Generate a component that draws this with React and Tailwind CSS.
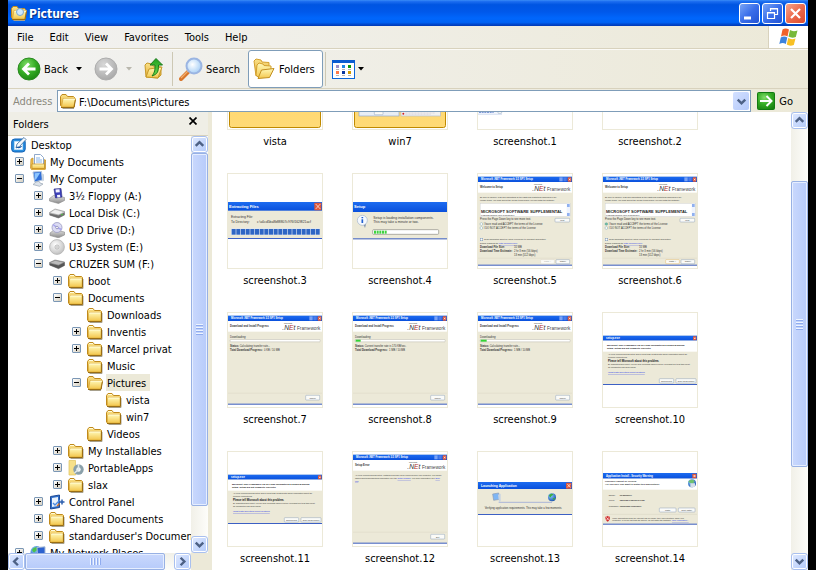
import React from "react";
import clsx from "clsx";

/* ---------- shared paint ---------- */

function Gradients() {
  const stops = (id, a, b, horizontal) => (
    <linearGradient id={id} x1="0" y1="0" x2={horizontal ? 1 : 0} y2={horizontal ? 0 : 1}>
      <stop offset="0" stopColor={a} />
      <stop offset="1" stopColor={b} />
    </linearGradient>
  );
  return (
    <svg width="0" height="0" className="absolute" aria-hidden="true">
      <defs>
        {stops("folder", "#fff9b8", "#f3c64c")}
        {stops("folderBack", "#fbe38a", "#e0a832")}
        {stops("titleBlue", "#1d6cf0", "#0a50dc")}
        {stops("drive", "#e3e3e3", "#8a8a8a")}
        {stops("gold", "#ffd469", "#ffda76")}
        {stops("arrowUp", "#1fa01f", "#6fd84f")}
        <radialGradient id="green" cx="0.4" cy="0.3" r="0.8">
          <stop offset="0" stopColor="#7fdc68" />
          <stop offset="0.5" stopColor="#35ac25" />
          <stop offset="1" stopColor="#17800f" />
        </radialGradient>
        <radialGradient id="grey" cx="0.4" cy="0.3" r="0.8">
          <stop offset="0" stopColor="#d8d8d8" />
          <stop offset="1" stopColor="#a3a3a3" />
        </radialGradient>
        <radialGradient id="lens" cx="0.4" cy="0.4" r="0.7">
          <stop offset="0" stopColor="#ffffff" />
          <stop offset="1" stopColor="#9cc9f5" />
        </radialGradient>
        <radialGradient id="disc" cx="0.4" cy="0.35" r="0.8">
          <stop offset="0" stopColor="#ffffff" />
          <stop offset="1" stopColor="#b4b4b4" />
        </radialGradient>
        <radialGradient id="globe" cx="0.35" cy="0.3" r="0.8">
          <stop offset="0" stopColor="#8fd0ff" />
          <stop offset="1" stopColor="#1148a8" />
        </radialGradient>
      </defs>
    </svg>
  );
}

/* ---------- 16px icons ---------- */

const Icon = ({ children, className = "size-4" }) => (
  <svg viewBox="0 0 16 16" className={clsx("shrink-0", className)} aria-hidden="true">
    {children}
  </svg>
);

const icons = {
  folder: (
    <>
      <path d="M2.500 15.500h12.500V6" stroke="#a7a08c" fill="none" />
      <path d="M0.500 3.500l1.500-2h4l1.500 2h6l1 1v9.500h-13l-1-1z" fill="url(#folderBack)" stroke="#c08a1c" />
      <path d="M1.500 6.500l1-1h11.500v8.500h-12.500z" fill="url(#folder)" stroke="#d9a838" strokeWidth="0.600" />
      <path d="M2 2.500h4M2.500 6h11" stroke="#fffbd8" fill="none" />
      <path d="M1 14.500h13.500v-9" stroke="#9a6e14" fill="none" />
    </>
  ),
  open: (
    <>
      <path d="M2.500 15.500h11.500" stroke="#a7a08c" fill="none" />
      <path d="M0.500 3.500l1.500-2h4l1.500 2h6l1 1v9h-13l-1-1z" fill="url(#folderBack)" stroke="#c08a1c" />
      <path d="M3 5.500h12.500l-1.800 8.500H1.500z" fill="url(#folder)" stroke="#d9a838" strokeWidth="0.800" />
      <path d="M3.500 6.200h11.500" stroke="#fffbd8" fill="none" />
      <path d="M1 14.500h13l1.500-8" stroke="#9a6e14" fill="none" />
    </>
  ),
  desktop: (
    <>
      <rect x="0.700" y="2" width="13.500" height="13" rx="3" fill="#2a8fe0" stroke="#0f5fb4" />
      <path d="M3.500 4.500h8v8h-8z" fill="#fff" stroke="#bcdcf5" />
      <path d="M5 11l1-4 7-6.500 2 2L8.500 9.500z" fill="#f4f8fc" stroke="#35699d" strokeWidth="0.800" />
      <path d="M5.500 10c2 1 4 .5 5-1" stroke="#1a5aa8" strokeWidth="1.300" fill="none" />
    </>
  ),
  documents: (
    <>
      <path d="M1 5l2-1v10l11.500.500v-9l1 .500v9l-1 1H2l-1.500-2z" fill="#f2c254" stroke="#bf8b1e" strokeWidth="0.700" />
      <path d="M4.500 0.500h6l3 3V12h-9z" fill="#fff" stroke="#8fa9cc" />
      <path d="M6 4h4M6 6h6M6 8h6" stroke="#85b3e8" />
      <path d="M2 10h12.500v4.500H2z" fill="url(#folder)" stroke="#c08a1c" strokeWidth="0.700" />
    </>
  ),
  computer: (
    <>
      <path d="M3 1l8.500-.500.800 8.500-7.600 2z" fill="#2f6fd8" stroke="#b4c6dc" />
      <path d="M4.500 2.200l5.700-.500L6 8.500 5 8.800z" fill="#8cc5ff" />
      <path d="M6 11l3-.700 1 1.700 3 1-3.500 2.300L3 13.500z" fill="#dde3ea" stroke="#9aa6b4" strokeWidth="0.700" />
      <path d="M12.300 2.500l1.700 1v6l-1.700 1" fill="#c6d2de" />
    </>
  ),
  floppy: (
    <>
      <path d="M0.500 10.500l4-3 11 2v3l-6 3-9-2.500z" fill="url(#drive)" stroke="#8a8a8a" strokeWidth="0.600" />
      <path d="M5 1l7-.500 1 8.500-6.500 1z" fill="#3c3fb8" stroke="#26287c" strokeWidth="0.600" />
      <path d="M6.500 1.500l4-.300.300 3-4 .300zM8 7l3-.300.300 2.500-3 .300z" fill="#f4f4ff" />
    </>
  ),
  disk: (
    <>
      <path d="M0.500 7.500L6 4l9.500 2.500v3.500l-6 3-9-3z" fill="url(#drive)" stroke="#888" strokeWidth="0.600" />
      <path d="M1.500 7.500L6.200 5l8 2-4.700 2.500z" fill="#f1f1f1" />
      <path d="M1 8.500l8.500 2v2.500l-8.500-2.800zM9.500 10.500l6-3v2.500l-6 3z" fill="#6e6e6e" />
      <circle cx="13" cy="9.600" r="0.800" fill="#4dc93c" />
    </>
  ),
  removable: (
    <>
      <path d="M0.500 6.500L6 4l9.500 2v3.500l-6 3.200-9-3.700z" fill="#8a8a8a" stroke="#7a7a7a" strokeWidth="0.600" />
      <path d="M1.500 6.700L6.200 4.800l8 1.600-4.700 2.300z" fill="#bcbcbc" />
      <path d="M1 7.500l8.500 2v3l-8.500-3.300zM9.500 9.500l6-3v3l-6 3z" fill="#565656" />
    </>
  ),
  cd: (
    <>
      <path d="M1 11l4-3 10.500 2v3l-6 2.800L1 13.500z" fill="url(#drive)" stroke="#8a8a8a" strokeWidth="0.600" />
      <circle cx="8" cy="5.500" r="5" fill="#dcdcf4" stroke="#9c9cc2" strokeWidth="0.800" />
      <path d="M8 5.500L4 2.500M8 5.500l4.500 2" stroke="#a7a4ef" strokeWidth="1.500" />
      <circle cx="8" cy="5.500" r="1.300" fill="#fff" stroke="#7f7fa8" strokeWidth="0.700" />
    </>
  ),
  u3: (
    <>
      <circle cx="8" cy="8" r="7.400" fill="url(#disc)" stroke="#b5b5b5" strokeWidth="0.800" />
      <circle cx="8" cy="8" r="2" fill="#fff" stroke="#aaa" strokeWidth="0.800" />
      <circle cx="8" cy="8" r="0.700" fill="#888" />
    </>
  ),
  portable: (
    <>
      <path d="M1 0.500h6.500v14.500H1z" fill="#f6e08a" stroke="#e0c25a" strokeWidth="0.700" />
      <circle cx="10.500" cy="9.500" r="5.200" fill="#8aa0aa" />
      <circle cx="10.500" cy="9.500" r="2.200" fill="#f3f7f8" />
      <path d="M10.500 4.300v5.200l-4 3.500" stroke="#dfe8ec" strokeWidth="1.500" fill="none" />
    </>
  ),
  control: (
    <>
      <path d="M1.500 2.500l9-1.500v12.500l-9 1.500z" fill="#2f6fca" stroke="#123f8e" strokeWidth="0.900" />
      <path d="M3 4l6-1v9l-6 1z" fill="#e9f2fc" />
      <path d="M4 9l2 2 5-5" stroke="#4d8ae0" strokeWidth="1.400" fill="none" />
      <path d="M8 12l2.500-2.500" stroke="#d0722b" strokeWidth="1.500" />
      <path d="M10 8h5.500M13 5.500v5" stroke="#2c5fae" strokeWidth="1.500" />
    </>
  ),
  network: (
    <>
      <circle cx="6.500" cy="7" r="6" fill="url(#globe)" />
      <path d="M2 5c2-4 6-3 7-1-1 2-3 1-4 3-1 1-2 0-3-2z" fill="#4cc24c" />
      <path d="M7 2.500l8-.700v8l-7.500 1z" fill="#2c62d0" stroke="#a9bcd6" />
    </>
  ),
};

/* Caption of a control, optically centred against its icon. */
const Caption = ({ children }) => <span className="pt-[2px]">{children}</span>;

/* ---------- scroll bars ---------- */

const chevrons = {
  up: "M4 9.500l4-4 4 4",
  down: "M4 6l4 4 4-4",
  left: "M9.500 4l-4 4 4 4",
  right: "M6 4l4 4-4 4",
};

function ArrowButton({ dir }) {
  return (
    <button
      type="button"
      aria-label={`Scroll ${dir}`}
      className="grid size-[17px] shrink-0 place-items-center rounded-[3px] border border-[#a9c0ef] bg-linear-to-br from-[#dfe9ff] to-[#b3cafa] shadow-[inset_0_0_0_1px_#fff]"
    >
      <Icon className="size-[15px]">
        <path d={chevrons[dir]} stroke="#4d6185" strokeWidth="2.600" fill="none" />
      </Icon>
    </button>
  );
}

function ScrollBar({ vertical, before, thumb, after }) {
  return (
    <div
      className={clsx(
        "flex shrink-0",
        vertical
          ? "w-[17px] flex-col bg-linear-to-r from-[#f1f0e8] to-[#fdfdfa]"
          : "h-[17px] bg-linear-to-b from-[#f1f0e8] to-[#fdfdfa]"
      )}
    >
      <ArrowButton dir={vertical ? "up" : "left"} />
      <div className={clsx("basis-0", before)} />
      <div
        className={clsx(
          "flex basis-0 items-center justify-center gap-px rounded-[2px] border border-[#98b1e4] shadow-[inset_0_0_0_1px_#e6eeff]",
          vertical ? "flex-col bg-linear-to-r" : "bg-linear-to-b",
          "from-[#c9d8fd] to-[#b7cbfa]",
          thumb
        )}
      >
        {[0, 1, 2, 3].map((n) => (
          <span
            key={n}
            className={clsx(
              "box-content border-[#8fabef] bg-[#eef4fe]",
              vertical ? "h-px w-[7px] border-b" : "h-[7px] w-px border-r"
            )}
          />
        ))}
      </div>
      <div className={clsx("basis-0", after)} />
      <ArrowButton dir={vertical ? "down" : "right"} />
    </div>
  );
}

/* ---------- title bar and menus ---------- */

function CaptionButton({ label, close, children }) {
  return (
    <button
      type="button"
      aria-label={label}
      className={clsx(
        "size-[21px] rounded-[3px] border border-white bg-linear-to-br",
        close ? "from-[#f5a48c] via-[#ec6a4c] to-[#dc4a2c]" : "from-[#7aa4f5] via-[#3a6eea] to-[#2253d4]"
      )}
    >
      <svg viewBox="0 0 19 19" className="size-[19px]" fill="none" stroke="#fff">
        {children}
      </svg>
    </button>
  );
}

function TitleBar() {
  return (
    <header className="flex h-[26px] shrink-0 items-center bg-[linear-gradient(180deg,#3a8cf6_0%,#1c6df0_6%,#0055e2_18%,#0058ea_45%,#0066fc_70%,#0062f4_86%,#0047cc_94%,#0138b4_100%)] pr-[2px] pl-[3px]">
      <Icon>
        {icons.open}
        <circle cx="9" cy="7" r="3.500" fill="#cfe8fb" stroke="#7ba7d0" />
      </Icon>
      <h1 className="ml-[2px] flex-1 pt-[2px] text-[12px] leading-4 font-bold text-white [text-shadow:1px_1px_1px_#0a2a7c]">
        Pictures
      </h1>
      <div className="flex gap-[2px]">
        <CaptionButton label="Minimize">
          <path d="M4 14h7" strokeWidth="3" />
        </CaptionButton>
        <CaptionButton label="Restore">
          <path d="M7.500 7V4.500h7v6H12M7 5h8" strokeWidth="1.200" />
          <path d="M4.500 8.500h7v6h-7zM4 9h8" strokeWidth="1.200" />
        </CaptionButton>
        <CaptionButton label="Close" close>
          <path d="M5 5l9 9M14 5l-9 9" strokeWidth="2.200" />
        </CaptionButton>
      </div>
    </header>
  );
}

const menus = ["File", "Edit", "View", "Favorites", "Tools", "Help"];

function MenuBar() {
  return (
    <div className="flex h-[23px] shrink-0 border-b border-[#d8d2bd]">
      <nav className="flex flex-1 items-center pl-px">
        {menus.map((m) => (
          <button key={m} type="button" className="px-2 pt-[2px]">
            {m}
          </button>
        ))}
      </nav>
      <div className="grid w-10 place-items-center border-l border-[#d8d2bd] bg-white">
        <svg viewBox="0 0 20 18" className="h-[18px] w-5" aria-hidden="true">
          <path d="M3.500 1.500q3-2 6.500 0L8.500 8.500q-3-2-6.500 0z" fill="#f0622a" />
          <path d="M11 2q3 2 7.500.500L16.800 9q-4 1.500-7.300-.500z" fill="#77b93a" />
          <path d="M1.800 9.500q3.500-2 6.500 0L6.800 16q-3-2-6.500 0z" fill="#3d83dd" />
          <path d="M9.200 10q3 2 7.300.500L14.800 17q-4 1.500-7-.500z" fill="#f8c023" />
        </svg>
      </div>
    </div>
  );
}

/* ---------- toolbar ---------- */

const Caret = ({ className }) => (
  <svg viewBox="0 0 6 4" className={clsx("h-1 w-[6px] fill-current", className)} aria-hidden="true">
    <path d="M0 0h6L3 3.500z" />
  </svg>
);

const RoundArrow = ({ back }) => (
  <svg viewBox="0 0 24 24" className="size-6" aria-hidden="true">
    <circle cx="12" cy="12" r="11" fill={back ? "url(#green)" : "url(#grey)"} stroke={back ? "#2b8a22" : "#adadad"} />
    <path
      d={back ? "M18.500 12H7M12 6.500L6.500 12l5.500 5.500" : "M5.500 12H17M12 6.500l5.500 5.500-5.500 5.500"}
      stroke="#fff"
      strokeWidth="2.800"
      fill="none"
    />
  </svg>
);

const Separator = () => <span className="h-[34px] w-px bg-[#cdc8b4]" />;

function ToolBar() {
  return (
    <div className="flex h-[40px] shrink-0 items-center border-t border-b border-t-[#fbfaf6] border-b-[#d8d2bd] pl-[9px]">
      <button type="button" className="flex items-center gap-[3px]">
        <RoundArrow back />
        <Caption>Back</Caption>
      </button>
      <button type="button" aria-label="Back history" className="ml-2">
        <Caret />
      </button>
      <button type="button" aria-label="Forward" className="ml-3" disabled>
        <RoundArrow />
      </button>
      <button type="button" aria-label="Forward history" className="ml-2 text-[#b9b7ad]" disabled>
        <Caret />
      </button>
      <button type="button" aria-label="Up" className="ml-3">
        <svg viewBox="0 0 20 24" className="h-6 w-5" aria-hidden="true">
          <path d="M1 8l2-2 5 1 1 2 8 1v8l-3 3L2 20z" fill="url(#folderBack)" stroke="#c79a2a" />
          <path d="M2 20l3-8 13-2-4 11z" fill="url(#folder)" stroke="#c79a2a" />
          <path d="M12 1.500l6.500 6.500h-4c0 7-1 9-6.500 11 3-4 3-6 3-11H6z" fill="url(#arrowUp)" stroke="#1a7a1a" />
        </svg>
      </button>
      <span className="ml-2 flex">
        <Separator />
      </span>
      <button type="button" className="ml-[6px] flex items-center gap-[3px]">
        <svg viewBox="0 0 24 24" className="size-6" aria-hidden="true">
          <path d="M2 22l8-8" stroke="#d8762c" strokeWidth="4" strokeLinecap="round" />
          <path d="M2 21l7-7" stroke="#f2ae6e" strokeWidth="1.200" />
          <circle cx="15" cy="9" r="7.500" fill="url(#lens)" stroke="#9bb5e2" strokeWidth="2" />
        </svg>
        <Caption>Search</Caption>
      </button>
      <button
        type="button"
        aria-pressed="true"
        className="ml-2 flex h-[38px] items-center gap-1 rounded-[3px] border border-[#7f9db9] bg-white pr-[7px] pl-1"
      >
        <svg viewBox="0 0 22 22" className="size-[22px]" aria-hidden="true">
          <path d="M1 3l2-2 5 1 1 2 7 .500v9L3 18z" fill="url(#folderBack)" stroke="#d3a02e" />
          <path d="M4 7l2-2 4 1 1 1.500 7 .500v8L6 20 3 17z" fill="url(#folder)" stroke="#d3a02e" />
          <path d="M5 20.500L8.500 12 21 10.500 16.500 19.500z" fill="url(#folder)" stroke="#c28f20" />
        </svg>
        <Caption>Folders</Caption>
      </button>
      <span className="ml-[2px] flex">
        <Separator />
      </span>
      <button type="button" aria-label="Views" className="ml-[6px] flex items-center gap-[3px]">
        <svg viewBox="0 0 23 19" className="h-[19px] w-[23px]" aria-hidden="true">
          <rect x="0.500" y="0.500" width="22" height="18" fill="#fff" stroke="#0a66d8" />
          <path d="M0 0h23v3H0z" fill="#0a5cd0" />
          <path d="M4 5h3v3H4z" fill="#9c8fc8" />
          <path d="M10 5h3v3h-3z" fill="#1c86e4" />
          <path d="M16 5h3v3h-3z" fill="#0a980a" />
          <path d="M4 11h3v3H4z" fill="#ff7a48" />
          <path d="M10 11h3v3h-3z" fill="#0a37a0" />
          <path d="M16 11h3v3h-3z" fill="#cf9a00" />
          <path d="M4 9.500h3m3 0h3m3 0h3M4 15.500h3m3 0h3m3 0h3" stroke="#b5b5b5" />
        </svg>
        <Caret />
      </button>
    </div>
  );
}

function AddressBar() {
  return (
    <div className="flex h-[23px] shrink-0 items-center pt-px pl-[5px]">
      <label htmlFor="address" className="w-[44px] pt-[2px] text-[#8b897d]">
        Address
      </label>
      <div className="flex h-[22px] flex-1 items-center border border-[#7f9db9] bg-white pr-px pl-[2px]">
        <Icon>{icons.open}</Icon>
        <input
          id="address"
          type="text"
          defaultValue="F:\Documents\Pictures"
          className="ml-[3px] h-5 min-w-0 flex-1 bg-transparent pt-[2px] outline-none"
        />
        <button
          type="button"
          aria-label="Address history"
          className="grid h-[18px] w-4 place-items-center rounded-[2px] bg-linear-to-br from-[#d3e0ff] to-[#b4c9fa]"
        >
          <Icon className="size-[15px]">
            <path d={chevrons.down} stroke="#4d6185" strokeWidth="2.600" fill="none" />
          </Icon>
        </button>
      </div>
      <button type="button" className="flex items-center gap-1 pr-[15px] pl-[6px]">
        <svg viewBox="0 0 18 18" className="size-[18px]" aria-hidden="true">
          <rect x="0.500" y="0.500" width="17" height="17" rx="1" fill="url(#green)" stroke="#127a12" />
          <path d="M3 9h11M9.500 4l5 5-5 5" stroke="#fff" strokeWidth="2" fill="none" />
        </svg>
        <Caption>Go</Caption>
      </button>
    </div>
  );
}

/* ---------- folder tree ---------- */

const tree = [
  [0, "", "desktop", "Desktop"],
  [1, "+", "documents", "My Documents"],
  [1, "-", "computer", "My Computer"],
  [2, "+", "floppy", "3½ Floppy (A:)"],
  [2, "+", "disk", "Local Disk (C:)"],
  [2, "+", "cd", "CD Drive (D:)"],
  [2, "+", "u3", "U3 System (E:)"],
  [2, "-", "removable", "CRUZER SUM (F:)"],
  [3, "+", "folder", "boot"],
  [3, "-", "folder", "Documents"],
  [4, "", "folder", "Downloads"],
  [4, "+", "folder", "Inventis"],
  [4, "+", "folder", "Marcel privat"],
  [4, "", "folder", "Music"],
  [4, "-", "open", "Pictures"],
  [5, "", "folder", "vista"],
  [5, "", "folder", "win7"],
  [4, "", "folder", "Videos"],
  [3, "+", "folder", "My Installables"],
  [3, "+", "portable", "PortableApps"],
  [3, "+", "folder", "slax"],
  [2, "+", "control", "Control Panel"],
  [2, "+", "folder", "Shared Documents"],
  [2, "+", "folder", "standarduser's Documents"],
  [1, "+", "network", "My Network Places"],
];

const indents = ["pl-[3px]", "pl-[3px]", "pl-[22px]", "pl-[41px]", "pl-[60px]", "pl-[79px]"];

function Expander({ state, name }) {
  return (
    <button
      type="button"
      aria-label={`${state === "+" ? "Expand" : "Collapse"} ${name}`}
      className="size-[9px] rounded-[1px] border border-[#7b97b5] bg-linear-to-br from-white to-[#d5cfc0]"
    >
      <svg viewBox="0 0 7 7" className="size-[7px]" stroke="#000">
        <path d={state === "+" ? "M1 3.500h5M3.500 1v5" : "M1 3.500h5"} />
      </svg>
    </button>
  );
}

function FolderPane() {
  return (
    <aside className="flex w-[200px] shrink-0 flex-col">
      <div className="flex h-6 shrink-0 items-center justify-between border-b border-[#d8d2bd] bg-[#efeee6] pr-[11px] pl-[5px]">
        <h2 className="pt-[2px]">Folders</h2>
        <button type="button" aria-label="Close folders" className="mb-[6px]">
          <svg viewBox="0 0 8 8" className="size-2" stroke="#000" strokeWidth="1.700">
            <path d="M0.500 0.500l7 7M7.500 0.500l-7 7" />
          </svg>
        </button>
      </div>
      <div className="flex min-h-0 flex-1">
        <ul className="min-w-0 flex-1 overflow-hidden bg-white">
          {tree.map(([level, state, icon, name]) => (
            <li key={name} className={clsx("flex h-[17px] items-center whitespace-nowrap", indents[level])}>
              {level > 0 && (
                <span className="flex w-[19px] shrink-0 pl-1">{state && <Expander state={state} name={name} />}</span>
              )}
              <Icon>{icons[icon]}</Icon>
              <a
                href="#tree"
                className={clsx("ml-[3px] h-[17px] pr-1 pl-px leading-[19px]", name === "Pictures" && "bg-[#ece9d8]")}
              >
                {name}
              </a>
            </li>
          ))}
        </ul>
        <ScrollBar vertical before="grow-0" thumb="grow-[354]" after="grow-[30]" />
      </div>
      <div className="flex bg-[#ece9d8] pr-[17px]">
        <div className="flex-1">
          <ScrollBar before="grow-0" thumb="grow-[140]" after="grow-[9]" />
        </div>
      </div>
    </aside>
  );
}

/* ---------- thumbnails, drawn on a 282 unit square ---------- */

const T = ({ x, y, s = 8, b, fill = "#333", children }) => (
  <text x={x} y={y} fontSize={s} fontWeight={b ? 700 : 400} fill={fill}>
    {children}
  </text>
);

const Link = ({ children }) => (
  <tspan fill="#2434e8" textDecoration="underline">
    {children}
  </tspan>
);

const CloseBox = ({ y, h }) => (
  <g>
    <rect x={282 - h} y={y} width={h - 2} height={h} rx="2" fill="#e0583a" />
    <path d={`M${286 - h} ${y + 4}l${h - 9} ${h - 8}m0 ${8 - h}l${9 - h} ${h - 8}`} stroke="#fff" strokeWidth="2" />
  </g>
);

const Window = ({ y, bar, h, title, size = 9, closable = true }) => (
  <g>
    <rect y={y} width="282" height={h} fill="#ece9d8" />
    <rect y={y} width="282" height={bar} fill="url(#titleBlue)" />
    <rect y={y + h - 3} width="282" height="3" fill="#3c60c4" />
    <T x={size > 10 ? 3 : 9} y={y + bar / 2 + size / 3} s={size} b fill="#fff">
      {title}
    </T>
    {closable && <CloseBox y={y + 2} h={bar - 3} />}
  </g>
);

const Btn = ({ x, y, w, h = 12, label, hot, dim }) => (
  <g>
    <rect x={x} y={y} width={w} height={h} rx="2" fill="#fbfbf8" stroke={hot ? "#dc9a2a" : dim ? "#d0ccbc" : "#5f7ba4"} />
    <text x={x + w / 2} y={y + h - 4} fontSize="6" textAnchor="middle" fill={dim ? "#aaa" : "#333"}>
      {label}
    </text>
  </g>
);

const NetWindow = ({ heading, foot }) => (
  <g>
    <Window y={8} bar={16} h={267} title="Microsoft .NET Framework 3.5 SP1 Setup" size={8} />
    <path d="M244 10h10v12h-10z" fill="#7aa2f4" />
    <path d="M256 10h10v12h-10z" fill="#4c7ce8" />
    <rect y="24" width="282" height="32" fill="#fff" />
    <T x={6} y={43} b>
      {heading}
    </T>
    <T x={168} y={32} s={6}>
      Microsoft
    </T>
    <text x="163" y="51" fontSize="20" fontStyle="italic" fill="#333">
      .N<tspan fill="#b0302a">E</tspan>t
    </text>
    <T x={207} y={51} s={14} fill="#444">
      Framework
    </T>
    <path d={`M0 ${foot}.500h282`} stroke="#d2cdb8" />
  </g>
);

const License = ({ accepted }) => (
  <g>
    <NetWindow heading="Welcome to Setup" foot={252} />
    <T x={6} y={73} s={6}>Be sure to carefully read and understand all the rights and restrictions described in the</T>
    <T x={6} y={82} s={6}>license terms. You must accept the license terms before you can install the software.</T>
    <rect x="6.500" y="88.500" width="270" height="39" fill="#fff" stroke="#c4c9cf" />
    <rect x="266" y="89" width="10" height="38" fill="#eef3fd" />
    <path d="M267 90h8v9h-8zM267 117h8v9h-8z" fill="#8fb0f0" />
    <T x={9} y={118} s={12} b fill="#222">MICROSOFT SOFTWARE SUPPLEMENTAL</T>
    <T x={9} y={127} s={6}>LICENSE TERMS FOR MICROSOFT</T>
    <T x={6} y={139}>Press the Page Down key to see more text.</T>
    <Btn x={231} y={133} w={44} h={11} label="Print" />
    <circle cx="10" cy="150" r="4" fill={accepted ? "#6fc2a0" : "#fff"} stroke="#4f8a9a" />
    <T x={17} y={152}>I have read and ACCEPT the terms of the License</T>
    <circle cx="10" cy="162" r="4" fill="#fff" stroke="#4f8a9a" />
    <T x={17} y={165}>I DO NOT ACCEPT the terms of the License</T>
    <rect x="6.500" y="192.500" width="8" height="8" fill="#fff" stroke="#4870a0" />
    <T x={18} y={199} s={6}>Send information about my setup experience to Microsoft Corporation.</T>
    <T x={6} y={210} s={6}>
      Details regarding the <Link>data collection policy</Link>
    </T>
    <T x={6} y={222} b>Download File Size:</T>
    <T x={108} y={222}>10 MB</T>
    <T x={6} y={235} b>Download Time Estimate:</T>
    <T x={108} y={235}>2 hr 3 min (56 kbps)</T>
    <T x={108} y={246}>13 min (512 kbps)</T>
    <Btn x={188} y={257} w={41} label="Install >" hot={accepted} dim={!accepted} />
    <Btn x={234} y={257} w={41} label="Cancel" />
  </g>
);

const Download = ({ status, total, fill }) => (
  <g>
    <NetWindow heading="Download and Install Progress" foot={240} />
    <T x={6} y={75}>Downloading:</T>
    <rect x="6.500" y="79.500" width="270" height="7" rx="2" fill="#fff" stroke="#9c9a90" />
    <rect x="8" y="80" width={fill} height="6" fill="#35d335" />
    <T x={6} y={102} b>Status:</T>
    <T x={35} y={102}>{status}</T>
    <T x={6} y={114} b>Total Download Progress:</T>
    <T x={108} y={114}>{total}</T>
    <Btn x={233} y={247} w={42} h={14} label="Cancel" />
  </g>
);

const ErrorReport = () => (
  <g>
    <Window y={68} bar={15} h={148} title="setup.exe" />
    <rect y="83" width="282" height="33" fill="#fff" />
    <T x={12} y={98} s={7} b fill="#111">Microsoft .NET Framework 3.5 SP1 has encountered a problem during</T>
    <T x={12} y={107} s={7} b fill="#111">setup. Setup did not complete correctly.</T>
    <T x={15} y={127} s={6}>An error occurred during setup and a report was created with useful information about the</T>
    <T x={15} y={135} s={6}>problem encountered.</T>
    <T x={15} y={147} s={8} b fill="#111">Please tell Microsoft about this problem.</T>
    <T x={15} y={156} s={6}>By submitting this report, you will help Microsoft improve setup. Microsoft will treat this report</T>
    <T x={15} y={164} s={6}>as confidential and anonymous.</T>
    <T x={15} y={180} s={7}>
      <Link>What data does this report contain?</Link>
    </T>
    <Btn x={169} y={197} w={43} h={13} label="Send Report" />
    <Btn x={219} y={197} w={60} h={13} label="Don't Send Report" />
  </g>
);

const FolderTile = ({ children }) => (
  <g>
    <rect x="4.500" y="4.500" width="273" height="273" rx="6" fill="url(#gold)" stroke="#c08a00" strokeWidth="3" />
    {children}
  </g>
);

const drawings = {
  vista: <FolderTile />,
  win7: (
    <FolderTile>
      <rect x="18" y="170" width="120" height="73" fill="#e8eef6" stroke="#93a9c8" strokeWidth="2" />
      <Btn x={64} y={230} w={26} h={9} />
      <rect x="144" y="170" width="118" height="73" fill="#f1f1f1" stroke="#b4bccb" strokeWidth="2" />
      <circle cx="151" cy="236" r="3" fill="#d02020" />
      <path d="M157 234h90M157 238h76" stroke="#b9a9c4" strokeDasharray="7 2" />
    </FolderTile>
  ),
  "screenshot.1": (
    <g>
      <rect x="0" y="190" width="72" height="48" fill="#f3f6fc" />
      <path d="M3 232h44" stroke="#7f9bd8" strokeWidth="4" strokeDasharray="6 2" />
      <Btn x={60} y={226} w={11} h={9} />
      <path d="M0 238h72" stroke="#8fa9dc" strokeWidth="1" />
    </g>
  ),
  "screenshot.2": null,
  "screenshot.3": (
    <g>
      <Window y={84} bar={26} h={111} title="Extracting Files" size={12} />
      <T x={9} y={131} s={10}>Extracting File:</T>
      <T x={9} y={147} s={10}>To Directory:</T>
      <T x={87} y={147} s={10}>c:\a6cd5ba8b88807c976f162f821acf</T>
      <rect x="9" y="163" width="266" height="20" fill="#dfe6f2" />
      {Array.from({ length: 19 }, (_, i) => (
        <rect key={i} x={11 + i * 14} y="165" width="12" height="17" fill="#2f66c4" />
      ))}
    </g>
  ),
  "screenshot.4": (
    <g>
      <Window y={84} bar={30} h={112} title="Setup" size={12} closable={false} />
      <path d="M32 152l4 10 3-12z" fill="#7b8ea8" />
      <circle cx="28" cy="139" r="15" fill="#f5f9ff" stroke="#9fb2cc" strokeWidth="2" />
      <path d="M28 136v11M28 129v4" stroke="#2260d0" strokeWidth="5" />
      <T x={61} y={134} s={10}>Setup is loading installation components.</T>
      <T x={61} y={148} s={10}>This may take a minute or two.</T>
      <rect x="59" y="167" width="198" height="14" rx="3" fill="#fff" stroke="#8d8d84" strokeWidth="2" />
      {[0, 1, 2, 3, 4].map((i) => (
        <rect key={i} x={63 + i * 8} y="170" width="6" height="9" fill="#3fd23f" />
      ))}
    </g>
  ),
  "screenshot.5": <License />,
  "screenshot.6": <License accepted />,
  "screenshot.7": <Download status="Calculating transfer rate..." total="0 KB / 10 MB" fill={0} />,
  "screenshot.8": <Download status="Current transfer rate is 170 KB/sec." total="1 MB / 10 MB" fill={15} />,
  "screenshot.9": <Download status="Calculating transfer rate..." total="1 MB / 10 MB" fill={18} />,
  "screenshot.10": <ErrorReport />,
  "screenshot.11": <ErrorReport />,
  "screenshot.12": (
    <g>
      <NetWindow heading="Setup Error" foot={240} />
      <T x={6} y={73} s={6}>An error occurred during setup. Installed files have been removed from your computer. For known</T>
      <T x={6} y={81} s={6}>
        issues and troubleshooting information, see the <Link>Setup Readme</Link>. For more information, see <Link>Error</Link>
      </T>
      <T x={6} y={89} s={6}>
        <Link>Log</Link>
      </T>
      <Btn x={233} y={247} w={42} h={14} label="Exit" />
    </g>
  ),
  "screenshot.13": (
    <g>
      <Window y={90} bar={21} h={99} title="Launching Application" size={10} />
      <path d="M62 151h160" stroke="#8b9cd8" strokeWidth="2" />
      <path d="M44 126l18-3 3 19-18 3z" fill="#7fb6f4" stroke="#8a9ab4" strokeWidth="2" />
      <path d="M60 128l8-3v23l-5 3z" fill="#c8d4e2" />
      <circle cx="222" cy="136" r="12" fill="url(#globe)" />
      <path d="M213 130c4-6 10-6 13-3-2 5-6 3-7 8-2 2-5 0-6-5zM224 138l8 0-4 7z" fill="#3cae3c" />
      <T x={20} y={172}>Verifying application requirements. This may take a few moments.</T>
    </g>
  ),
  "screenshot.14": (
    <g>
      <Window y={63} bar={17} h={155} title="Application Install - Security Warning" size={8} />
      <rect y="80" width="282" height="33" fill="#fff" />
      <T x={6} y={91} s={7} b>Publisher cannot be verified.</T>
      <T x={6} y={100} s={7} b>Are you sure you want to install this application?</T>
      <circle cx="267" cy="94" r="12" fill="url(#globe)" />
      <path d="M256 90c5-8 13-8 19-3l-6 9z" fill="#6fc16f" />
      <path d="M262 94l14 0 0 10-14 3z" fill="#d5dfe8" />
      <T x={17} y={132} s={7}>Name:</T>
      <T x={50} y={132} s={7} b>RegShaver</T>
      <T x={17} y={148} s={7}>From:</T>
      <T x={50} y={148} s={7} b>raskyan.codeplex.com</T>
      <T x={17} y={164} s={7}>Publisher:</T>
      <T x={50} y={164} s={7} b>Unknown Publisher</T>
      <Btn x={169} y={168} w={50} label="Install" />
      <Btn x={226} y={168} w={50} label="Don't Install" />
      <path d="M0 187h282" stroke="#cbc7b5" />
      <path d="M7 194q7 0 7-3 1 3 7 3 0 12-7 15-7-3-7-15z" fill="#d22a2a" />
      <path d="M10 196l8 9m0-9l-8 9" stroke="#fff" strokeWidth="2" />
      <T x={28} y={200} s={6}>While applications from the Internet can be useful, they can potentially harm your</T>
      <T x={28} y={208} s={6}>
        computer. If you do not trust the source, do not install the software. <Link>More Information...</Link>
      </T>
    </g>
  ),
};

function FileGrid() {
  return (
    <main className="min-w-0 flex-1 overflow-hidden bg-white">
      <ul className="-mt-[78px] grid auto-rows-[139px] grid-cols-[repeat(auto-fill,96px)] gap-x-[29px] pl-[15px]">
        {Object.entries(drawings).map(([name, drawing]) => (
          <li key={name}>
            <figure className="flex flex-col items-center gap-[5px]">
              <svg
                viewBox="0 0 282 282"
                className="size-24 border border-[#ece9d8] font-['Liberation_Sans',sans-serif]"
                aria-hidden="true"
              >
                {drawing}
              </svg>
              <figcaption className="leading-[14px]">{name}</figcaption>
            </figure>
          </li>
        ))}
      </ul>
    </main>
  );
}

export default function App() {
  return (
    <div className="flex h-screen flex-col bg-black px-2 font-['DejaVu_Sans_Condensed','DejaVu_Sans',sans-serif] text-[11px] leading-[14px] text-black">
      <Gradients />
      <TitleBar />
      <div className="flex shrink-0 flex-col bg-linear-to-r from-[#f2f2f1] to-[#ece9d8]">
        <MenuBar />
        <ToolBar />
        <AddressBar />
      </div>
      <div className="flex min-h-0 flex-1">
        <FolderPane />
        <div className="w-1 shrink-0 bg-[#ece9d8]" />
        <FileGrid />
        <ScrollBar vertical before="grow-[52]" thumb="grow-[285]" after="grow-[86]" />
      </div>
    </div>
  );
}
